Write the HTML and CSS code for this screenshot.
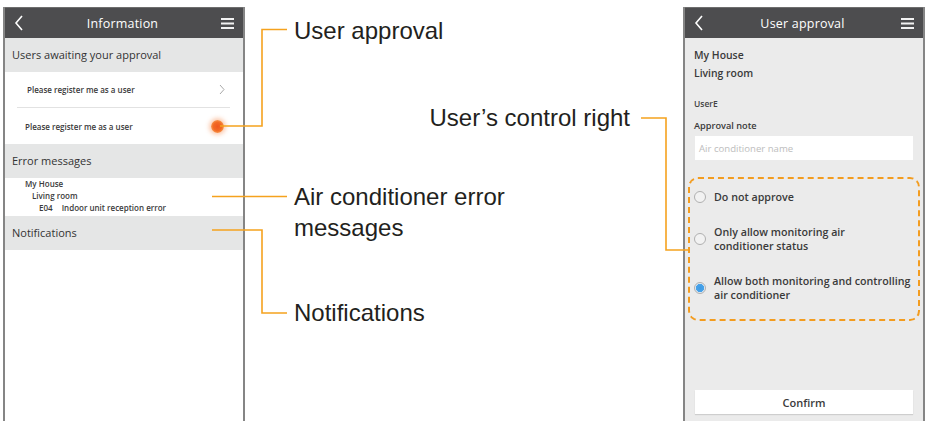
FILE: index.html
```html
<!DOCTYPE html>
<html lang="en">
  <head>
    <meta charset="UTF-8" />
    <meta name="viewport" content="width=device-width, initial-scale=1.0" />
    <title>Information and user approval</title>
    <link rel="stylesheet" href="styles.css">
  </head>
  <body>
    <div class="sheet">

      <!-- Information screen -->
      <div class="phone">
        <div class="topbar">
          <svg class="back" width="10" height="16" viewBox="0 0 10 16"><polyline points="8,1 2,8 8,15" /></svg>
          <span class="topbar-title">Information</span>
          <svg class="menu" width="13" height="11" viewBox="0 0 13 11"><rect x="0" y="0" width="13" height="2" /><rect x="0" y="4.5" width="13" height="2" /><rect x="0" y="9" width="13" height="2" /></svg>
        </div>
        <div class="sec-title">Users awaiting your approval</div>
        <div class="row">
          <span>Please register me as a user</span>
          <svg class="chev" width="6" height="11" viewBox="0 0 6 11"><polyline points="1,1 5,5.5 1,10" /></svg>
        </div>
        <div class="sep"></div>
        <div class="row row-tap">
          <span>Please register me as a user</span>
          <span class="tap-dot"></span>
        </div>
        <div class="sec-title">Error messages</div>
        <div class="errors">
          <div class="err-house">My House</div>
          <div class="err-room">Living room</div>
          <div class="err-code"><span class="code">E04</span>Indoor unit reception error</div>
        </div>
        <div class="sec-title">Notifications</div>
      </div>

      <!-- User approval screen -->
      <div class="phone phone-gray">
        <div class="topbar">
          <svg class="back" width="10" height="16" viewBox="0 0 10 16"><polyline points="8,1 2,8 8,15" /></svg>
          <span class="topbar-title">User approval</span>
          <svg class="menu" width="13" height="11" viewBox="0 0 13 11"><rect x="0" y="0" width="13" height="2" /><rect x="0" y="4.5" width="13" height="2" /><rect x="0" y="9" width="13" height="2" /></svg>
        </div>
        <div class="approval">
          <div class="place">My House</div>
          <div class="place">Living room</div>
          <div class="user-name">UserE</div>
          <div class="note-label">Approval note</div>
          <div class="note-input">Air conditioner name</div>
          <div class="choices">
            <div class="choice">
              <span class="radio"></span>
              <span>Do not approve</span>
            </div>
            <div class="choice">
              <span class="radio"></span>
              <span>Only allow monitoring air<br>conditioner status</span>
            </div>
            <div class="choice">
              <span class="radio radio-on"></span>
              <span>Allow both monitoring and controlling<br>air conditioner</span>
            </div>
          </div>
          <div class="confirm">Confirm</div>
        </div>
      </div>

      <!-- callouts -->
      <svg class="leaders" width="927" height="421" viewBox="0 0 927 421">
        <polyline points="220,126 262,126 262,29.5 287,29.5" />
        <polyline points="212,196.5 287,196.5" />
        <polyline points="212,230 262,230 262,313 287,313" />
        <polyline points="641,118 666,118 666,250 688,250" />
      </svg>
      <div class="label label-approval">User approval</div>
      <div class="label label-error">Air conditioner error<br>messages</div>
      <div class="label label-notes">Notifications</div>
      <div class="label label-right">User’s control right</div>
    </div>
  </body>
</html>
```

FILE: styles.css
```css
body {
  margin: 0;
  background: #fff;
  font-family: "Open Sans", "Noto Sans", sans-serif;
  color: #3a3a3a;
}
.sheet {
  position: relative;
  width: 927px;
  height: 421px;
  overflow: hidden;
  display: flex;
  gap: 438px;
  padding-left: 3px;
  box-sizing: border-box;
}
.phone {
  width: 238px;
  height: 414px;
  margin-top: 7px;
  border-left: 2px solid #858585;
  border-right: 2px solid #858585;
  background: #fff;
  flex-shrink: 0;
}
.phone-gray {
  background: #ebebeb;
}
.topbar {
  height: 31px;
  background: #4d4d4f;
  border-top: 1px solid #6e6e6e;
  box-sizing: border-box;
  display: flex;
  align-items: center;
  justify-content: space-between;
  padding: 0 9px 0 9px;
  color: #fff;
}
.back polyline {
  fill: none;
  stroke: #fff;
  stroke-width: 1.6;
}
.menu rect {
  fill: #f2f2f2;
}
.topbar-title {
  font-size: 12.5px;
  letter-spacing: 0.2px;
}
.sec-title {
  height: 34px;
  background: #e5e6e6;
  display: flex;
  align-items: center;
  padding-left: 7px;
  padding-bottom: 1px;
  box-sizing: border-box;
  font-size: 11px;
  color: #333;
}
.row {
  height: 35px;
  display: flex;
  align-items: center;
  justify-content: space-between;
  padding: 0 18px 0 22px;
  font-size: 8px;
  font-weight: 600;
  color: #3a3a3a;
}
.row-tap {
  height: 36px;
  padding-left: 20px;
  padding-right: 18px;
}
.chev polyline {
  fill: none;
  stroke: #a8a8a8;
  stroke-width: 1;
}
.sep {
  height: 1px;
  background: #e2e2e2;
  margin: 0 13px 0 12px;
}
.tap-dot {
  width: 13px;
  height: 13px;
  border-radius: 50%;
  background: radial-gradient(circle, #f0581e 0%, #f26a24 45%, #f7924a 70%, rgba(250, 170, 110, 0) 100%);
  box-shadow: 0 0 4px 2px rgba(246, 140, 80, 0.45);
  margin-right: 1px;
}
.errors {
  height: 38px;
  font-size: 8px;
  font-weight: 600;
  line-height: 12px;
  color: #3a3a3a;
}
.err-house {
  padding-left: 20px;
}
.err-room {
  padding-left: 27px;
}
.err-code {
  padding-left: 34px;
}
.code {
  margin-right: 9px;
}
.approval {
  padding: 8px 9px 0 9px;
  display: flex;
  flex-direction: column;
}
.place {
  font-size: 10.4px;
  font-weight: 600;
  line-height: 18px;
  color: #3a3a3a;
}
.user-name {
  margin-top: 16px;
  font-size: 8.5px;
  font-weight: 600;
  line-height: 12px;
  color: #444;
}
.note-label {
  margin-top: 10px;
  font-size: 9.2px;
  font-weight: 600;
  line-height: 12px;
  color: #3a3a3a;
}
.note-input {
  margin-top: 4px;
  margin-left: 1px;
  margin-right: 1px;
  height: 24px;
  background: #fff;
  display: flex;
  align-items: center;
  padding-left: 4px;
  font-size: 9.6px;
  color: #bdbdbd;
}
.choices {
  margin: 17px -6px 0 -6px;
  height: 144px;
  box-sizing: border-box;
  border: 2px dashed #f39c1f;
  border-radius: 10px;
  padding: 11px 0 0 4px;
  display: flex;
  flex-direction: column;
  gap: 21px;
}
.choice {
  display: flex;
  align-items: center;
  gap: 8px;
  font-size: 10.7px;
  font-weight: 600;
  line-height: 14px;
  color: #3a3a3a;
}
.radio {
  width: 10px;
  height: 10px;
  border-radius: 50%;
  border: 1px solid #b0b0b0;
  background: #f2f2f2;
  flex-shrink: 0;
}
.radio-on {
  background: radial-gradient(circle, #3d9be6 0%, #4aa3e8 55%, #dfe9f2 62%, #f0f0f0 100%);
}
.confirm {
  margin-top: 69px;
  margin-left: 1px;
  margin-right: 1px;
  height: 24px;
  background: #fff;
  box-shadow: 0 1px 1px rgba(0, 0, 0, 0.12);
  display: flex;
  align-items: center;
  justify-content: center;
  font-size: 11px;
  font-weight: 600;
  color: #3a3a3a;
}
.leaders {
  position: absolute;
  left: 0;
  top: 0;
  pointer-events: none;
}
.leaders polyline {
  fill: none;
  stroke: #f5a21e;
  stroke-width: 1.6;
}
.label {
  position: absolute;
  font-family: "Liberation Sans", Arial, sans-serif;
  font-size: 24px;
  line-height: 31px;
  color: #231f20;
  white-space: nowrap;
}
.label-approval {
  left: 294px;
  top: 15px;
}
.label-error {
  left: 294px;
  top: 181px;
}
.label-notes {
  left: 294px;
  top: 297px;
}
.label-right {
  right: 297px;
  top: 102px;
}
```
